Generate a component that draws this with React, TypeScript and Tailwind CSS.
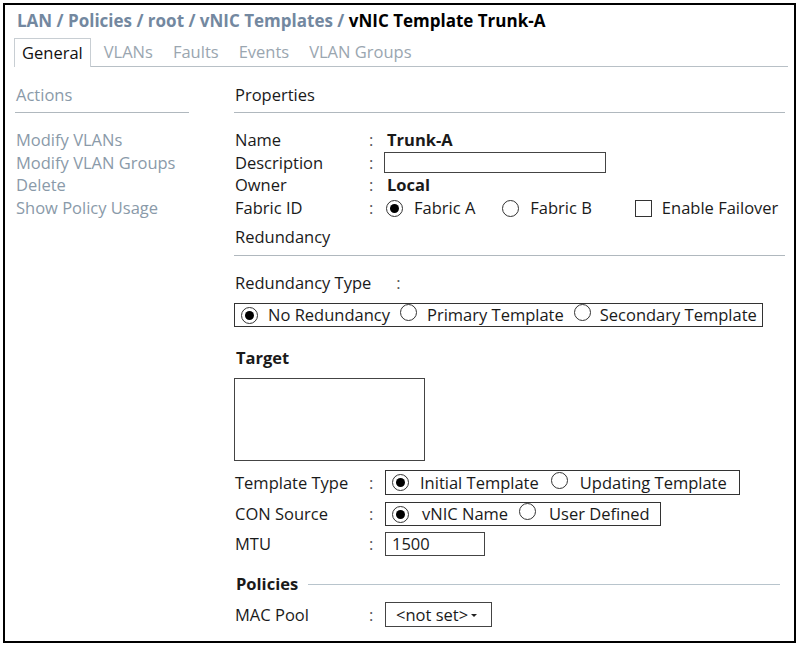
import type { ReactNode } from 'react'

function Radio({ checked }: { checked?: boolean }) {
  return (
    <span className="inline-flex h-[17px] w-[17px] shrink-0 items-center justify-center rounded-full border border-[#333]">
      {checked && <span className="h-[9px] w-[9px] rounded-full bg-black" />}
    </span>
  )
}

function Row({ label, children }: { label: string; children?: ReactNode }) {
  return (
    <div className="flex h-[22.6px] items-center">
      <span className="w-[134px] shrink-0">{label}</span>
      <span className="w-[17px] shrink-0 text-[#555]">:</span>
      {children}
    </div>
  )
}

export default function App() {
  return (
    <div className="min-h-[645px] bg-white pl-[3px] pt-[3px] text-[16.5px] leading-[22px] text-[#1a1a1a]" style={{ fontFamily: '"Open Sans", "Noto Sans", sans-serif' }}>
      <div className="h-[640px] w-[793px] border-2 border-black">
        {/* breadcrumb */}
        <div className="whitespace-nowrap pl-[12px] pt-[4px] text-[17px] font-bold leading-[24px] text-[#7388a0]">
          LAN / Policies / root / vNIC Templates / <span className="text-black">vNIC Template Trunk-A</span>
        </div>

        {/* tabs */}
        <div className="mt-[5px] flex h-[29px] items-stretch pl-[9px] pr-[6px]">
          <div className="flex items-center border border-b-0 border-[#c8ced3] px-[7px] text-[#111]">General</div>
          <div className="flex flex-1 items-center gap-[20px] border-b border-[#b8c0c6] pl-[13px] text-[#9aa6b0]">
            <span>VLANs</span>
            <span>Faults</span>
            <span>Events</span>
            <span>VLAN Groups</span>
          </div>
        </div>

        <div className="mt-[18px] flex">
          {/* actions column */}
          <div className="ml-[10px] w-[174px] shrink-0 whitespace-nowrap text-[#8a9aa9]">
            <div className="h-[19px] pl-px leading-[19px]">Actions</div>
            <div className="mt-[8px] border-t border-[#b0b8be]" />
            <div className="mt-[16px]">
              <div className="flex h-[22.6px] items-center pl-px">Modify VLANs</div>
              <div className="flex h-[22.6px] items-center pl-px">Modify VLAN Groups</div>
              <div className="flex h-[22.6px] items-center pl-px">Delete</div>
              <div className="flex h-[22.6px] items-center pl-px">Show Policy Usage</div>
            </div>
          </div>

          {/* properties column */}
          <div className="ml-[45px] w-[551px] whitespace-nowrap">
            <div className="h-[19px] pl-px leading-[19px]">Properties</div>
            <div className="mt-[8px] border-t border-[#b0b8be]" />
            <div className="mt-[16px] pl-px">
              <Row label="Name"><span className="pl-px font-bold">Trunk-A</span></Row>
              <Row label="Description">
                <span className="-ml-[2px] h-[21px] w-[222px] border border-[#444]" />
              </Row>
              <Row label="Owner"><span className="pl-px font-bold">Local</span></Row>
              <Row label="Fabric ID">
                <span className="flex items-center gap-[11px]"><Radio checked />Fabric A</span>
                <span className="ml-[27px] flex items-center gap-[11px]"><Radio />Fabric B</span>
                <span className="ml-[43px] flex items-center gap-[10px]">
                  <span className="h-[17px] w-[17px] shrink-0 border border-[#333]" />Enable Failover
                </span>
              </Row>
            </div>
            <div className="mt-[8px] h-[20px] pl-px leading-[20px]">Redundancy</div>
            <div className="mt-[8px] border-t border-[#b0b8be]" />

            <div className="mt-[17px] flex h-[20px] items-center pl-px">
              <span>Redundancy Type</span>
              <span className="ml-[25px] text-[#555]">:</span>
            </div>
            <div className="mt-[10px] flex h-[24px] w-[529px] items-center border border-[#333] pl-[6px]">
              <Radio checked />
              <span className="ml-[10px]">No Redundancy</span>
              <span className="ml-[10px]"><Radio /></span>
              <span className="ml-[10px]">Primary Template</span>
              <span className="ml-[10px]"><Radio /></span>
              <span className="ml-[9px]">Secondary Template</span>
            </div>

            <div className="mt-[20px] h-[22px] pl-[2px] font-bold leading-[22px]">Target</div>
            <div className="mt-[9px] h-[83px] w-[191px] border border-[#444]" />

            <div className="mt-[9px] pl-px">
              <div className="flex h-[25px] items-center">
                <span className="w-[134px] shrink-0">Template Type</span>
                <span className="w-[16px] shrink-0 text-[#555]">:</span>
                <span className="flex h-[25px] w-[355px] items-center border border-[#333] pl-[6px]">
                  <Radio checked />
                  <span className="ml-[11px]">Initial Template</span>
                  <span className="ml-[12px]"><Radio /></span>
                  <span className="ml-[12px]">Updating Template</span>
                </span>
              </div>
              <div className="mt-[7px] flex h-[24px] items-center">
                <span className="w-[134px] shrink-0">CON Source</span>
                <span className="w-[16px] shrink-0 text-[#555]">:</span>
                <span className="flex h-[24px] w-[276px] items-center border border-[#333] pl-[6px]">
                  <Radio checked />
                  <span className="ml-[13px]">vNIC Name</span>
                  <span className="ml-[11px]"><Radio /></span>
                  <span className="ml-[13px]">User Defined</span>
                </span>
              </div>
              <div className="mt-[6px] flex h-[24px] items-center">
                <span className="w-[134px] shrink-0">MTU</span>
                <span className="w-[16px] shrink-0 text-[#555]">:</span>
                <span className="flex h-[24px] w-[100px] items-center border border-[#444] pl-[6px]">1500</span>
              </div>
            </div>

            <div className="mt-[17px] flex h-[22px] items-center pl-[2px]">
              <span className="font-bold">Policies</span>
              <span className="ml-[10px] mr-[5px] flex-1 border-t border-[#b8c4cc]" />
            </div>

            <div className="mt-[7px] flex h-[25px] items-center pl-px">
              <span className="w-[134px] shrink-0">MAC Pool</span>
              <span className="w-[16px] shrink-0 text-[#555]">:</span>
              <span className="flex h-[25px] w-[107px] items-center border border-[#444] pl-[10px]">
                &lt;not set&gt;
                <span className="ml-[3px] mt-[2px] h-0 w-0 border-x-[3px] border-t-[3px] border-x-transparent border-t-[#222]" />
              </span>
            </div>
          </div>
        </div>
      </div>
    </div>
  )
}
